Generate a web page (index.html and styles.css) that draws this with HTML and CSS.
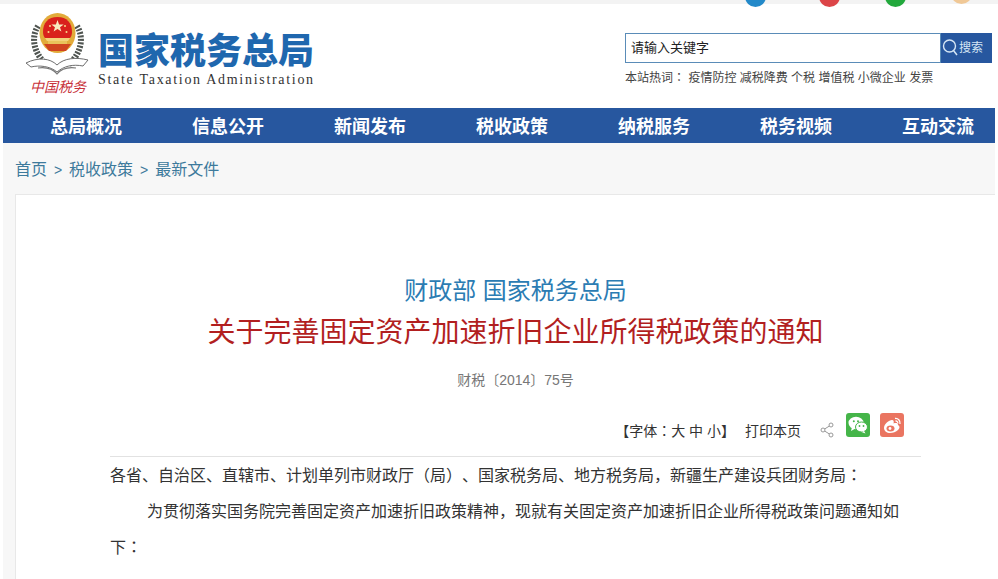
FILE: index.html
```html
<!DOCTYPE html>
<html>
<head>
  <meta charset="utf-8">
  <link rel="stylesheet" href="styles.css">
  <title>关于完善固定资产加速折旧企业所得税政策的通知</title>
</head>
<body>
  <div class="topbar">
    <span class="dot dot-blue"></span>
    <span class="dot dot-red"></span>
    <span class="dot dot-green"></span>
    <span class="dot dot-orange"></span>
  </div>

  <div class="header">
    <div class="logo">
      <div class="emblem">
        <svg width="70" height="63" viewBox="0 0 70 63">
          <!-- wreath -->
          <path d="M15 13 C8 24 10 40 24 52" fill="none" stroke="#4f5450" stroke-width="6" stroke-dasharray="2 1.4"/>
          <path d="M54 13 C61 24 59 40 45 52" fill="none" stroke="#4f5450" stroke-width="6" stroke-dasharray="2 1.4"/>
          <!-- gold ring and red field -->
          <ellipse cx="34.5" cy="20" rx="18" ry="20" fill="#e2ab3a"/>
          <path d="M34.5 4 C25 4 20 10 20 19 C20 22 21 24 22 25 H47 C48 24 49 22 49 19 C49 10 44 4 34.5 4 Z" fill="#d9211c"/>
          <path d="M34.5 7 l1.6 4.4 4.6 0 -3.7 2.8 1.4 4.4 -3.9 -2.7 -3.9 2.7 1.4 -4.4 -3.7 -2.8 4.6 0 Z" fill="#f8ecc0"/>
          <circle cx="27" cy="13" r="1" fill="#f6dc8a"/>
          <circle cx="42" cy="13" r="1" fill="#f6dc8a"/>
          <circle cx="25.5" cy="19" r="1" fill="#f6dc8a"/>
          <circle cx="43.5" cy="19" r="1" fill="#f6dc8a"/>
          <path d="M22 25 h25 l-2 3 h-21 Z" fill="#f3d27a"/>
          <path d="M25 28 h19 v3 h-19 Z" fill="#e9c25a"/>
          <path d="M21 31 h27 l-5 7 h-17 Z" fill="#d0441f"/>
          <!-- open book -->
          <path d="M3 50 C15 44 27 45 34 52 C41 45 53 44 65 47 L60 53 C50 51 41 53 34 59 C27 53 16 52 8 54 Z" fill="#fff" stroke="#6e6e6e" stroke-width="1"/>
          <path d="M15 55 C23 54 30 56 34 61 C38 56 45 54 53 55" fill="none" stroke="#777" stroke-width="1.2"/>
        </svg>
      </div>
      <div class="logo-script">中国税务</div>
    </div>
    <div class="brand">
      <div class="brand-name">国家税务总局</div>
      <div class="brand-en">State Taxation Administration</div>
    </div>
    <div class="search-area">
      <div class="search">
        <div class="search-input">请输入关键字</div>
        <div class="search-btn">
          <svg width="17" height="18" viewBox="0 0 17 18">
            <circle cx="7.5" cy="8" r="6" fill="none" stroke="#d5e6f5" stroke-width="1.4"/>
            <path d="M11.5 12.5 L15 17" stroke="#d5e6f5" stroke-width="1.5"/>
          </svg>
          <span>搜索</span>
        </div>
      </div>
      <div class="hotwords">本站热词<span class="colon">：</span> <a>疫情防控</a> <a>减税降费</a> <a>个税</a> <a>增值税</a> <a>小微企业</a> <a>发票</a></div>
    </div>
  </div>

  <div class="nav">
    <a>总局概况</a>
    <a>信息公开</a>
    <a>新闻发布</a>
    <a>税收政策</a>
    <a>纳税服务</a>
    <a>税务视频</a>
    <a>互动交流</a>
  </div>

  <div class="main">
    <div class="crumbs">首页 <i>&gt;</i> 税收政策 <i>&gt;</i> 最新文件</div>
    <div class="card">
      <h2 class="issuer">财政部 国家税务总局</h2>
      <h1 class="title">关于完善固定资产加速折旧企业所得税政策的通知</h1>
      <div class="docno">财税〔2014〕75号</div>
      <div class="tools">
        <span class="fontsize">【字体<span class="colon">：</span>大 中 小】</span>
        <span class="print">打印本页</span>
        <svg class="share" width="14" height="16" viewBox="0 0 14 16">
          <path d="M3 8 L11 3 M3 8 L11 13" stroke="#999" stroke-width="1" fill="none"/>
          <circle cx="3" cy="8" r="2" fill="#fff" stroke="#999"/>
          <circle cx="11" cy="3" r="2" fill="#fff" stroke="#999"/>
          <circle cx="11" cy="13" r="2" fill="#fff" stroke="#999"/>
        </svg>
        <span class="sns sns-wechat">
          <svg width="24" height="24" viewBox="0 0 24 24">
            <ellipse cx="10" cy="10" rx="7.5" ry="6.2" fill="#fff"/>
            <path d="M6 14 L5 18 L9.5 15.5 Z" fill="#fff"/>
            <ellipse cx="15.5" cy="14" rx="6" ry="5" fill="#fff" stroke="#45b549" stroke-width="1"/>
            <path d="M18 18 L19.5 20.5 L15.5 19 Z" fill="#fff"/>
            <circle cx="7.8" cy="8.2" r="1" fill="#45b549"/>
            <circle cx="12" cy="8.2" r="1" fill="#45b549"/>
            <circle cx="13.5" cy="13" r=".9" fill="#45b549"/>
            <circle cx="17.5" cy="13" r=".9" fill="#45b549"/>
          </svg>
        </span>
        <span class="sns sns-weibo">
          <svg width="24" height="24" viewBox="0 0 24 24">
            <path d="M4 15 C4 11 9 7 12 7 C14 7 14 9 13.5 10.5 C16 9.5 18 10 18 12 C20 13 20 15 18 17 C16 19 13 20 10 20 C7 20 4 18 4 15 Z" fill="#fff"/>
            <ellipse cx="10.5" cy="15.5" rx="4" ry="3" fill="#ea7561"/>
            <circle cx="10" cy="15.5" r="1.4" fill="#fff"/>
            <path d="M15 5.5 C18 5 20.5 7.5 20 11 M15.5 8 C17 7.8 18 9 17.8 10.5" fill="none" stroke="#fff" stroke-width="1.3"/>
          </svg>
        </span>
      </div>
      <div class="article">
        <p class="lead">各省、自治区、直辖市、计划单列市财政厅（局）、国家税务局、地方税务局，新疆生产建设兵团财务局<span class="colon">：</span></p>
        <p class="indent">为贯彻落实国务院完善固定资产加速折旧政策精神，现就有关固定资产加速折旧企业所得税政策问题通知如下<span class="colon">：</span></p>
      </div>
    </div>
  </div>
</body>
</html>
```

FILE: styles.css
```css
html, body {
  height: 579px;
  overflow: hidden;
}

body {
  margin: 0;
  background-color: #fff;
  color: #333;
  font-family: "Liberation Sans", "Noto Sans CJK SC", sans-serif;
  text-spacing-trim: space-all;
}

/* centred fullwidth colon, as in the original page font */
.colon {
  font-family: "Noto Sans CJK TC", sans-serif;
  line-height: 0;
}

.topbar {
  display: flex;
  height: 8px;
  padding-left: 745px;
  overflow: hidden;
  background: linear-gradient(#f3f3f3 4px, #fff 4px);
}

.dot {
  flex: none;
  width: 21px;
  height: 21px;
  margin-top: -14px;
  margin-right: 53px;
  border-radius: 50%;
}

.dot-blue { background-color: #2389c9; }
.dot-red { background-color: #dc4548; margin-right: 45px; }
.dot-green { background-color: #22a83c; margin-right: 45px; }
.dot-orange { background-color: #f0c896; margin-top: -17px; }

.header {
  display: flex;
  height: 100px;
}

.logo {
  width: 98px;
  padding: 5px 0 0 23px;
  box-sizing: border-box;
}

.emblem {
  height: 64px;
}

.logo-script {
  font-size: 14px;
  line-height: 20px;
  padding-left: 7px;
  color: #c8323a;
  font-style: italic;
}

.brand {
  width: 527px;
  padding-top: 24px;
  box-sizing: border-box;
}

.brand-name {
  font-size: 36px;
  line-height: 40px;
  font-weight: 900;
  color: #1f67ae;
}

.brand-en {
  margin-top: -1px;
  font-family: "Liberation Serif", serif;
  font-size: 14px;
  line-height: 18px;
  letter-spacing: 1.7px;
  color: #333;
}

.search-area {
  padding-top: 25px;
}

.search {
  display: flex;
  width: 367px;
  height: 30px;
}

.search-input {
  width: 316px;
  box-sizing: border-box;
  padding-left: 5px;
  border: 1px solid #5a8cb8;
  font-size: 13px;
  line-height: 28px;
  color: #222;
}

.search-btn {
  display: flex;
  align-items: center;
  flex: 1;
  padding: 0 0 3px 1px;
  box-sizing: border-box;
  background-color: #27579f;
  font-size: 12px;
  color: #d5e6f5;
}

.hotwords {
  margin-top: 7px;
  font-size: 12px;
  line-height: 16px;
  color: #444;
  white-space: nowrap;
}

.nav {
  display: flex;
  height: 35px;
  margin: 0 3px;
  padding-left: 12px;
  background-color: #27579f;
  overflow: hidden;
}

.nav a {
  flex: none;
  width: 142px;
  text-align: center;
  font-size: 18px;
  line-height: 39px;
  font-weight: bold;
  color: #fff;
}

.main {
  height: 436px;
  margin: 0 3px;
  padding-left: 12px;
  background-color: #f7f7f7;
}

.crumbs {
  height: 51px;
  font-size: 16px;
  line-height: 54px;
  color: #3d7a9c;
}

.crumbs i {
  font-style: normal;
  font-size: 14px;
  padding: 0 2.5px;
}

.card {
  height: 385px;
  padding: 0 74px 0 94px;
  background-color: #fff;
  border: 1px solid #e8e8e8;
  border-right: 0;
}

.issuer {
  margin: 79px 0 0;
  text-align: center;
  font-size: 24px;
  line-height: 34px;
  font-weight: normal;
  color: #2b7cb3;
}

.title {
  margin: 0;
  text-align: center;
  font-size: 28px;
  line-height: 50px;
  font-weight: normal;
  color: #b21f1f;
}

.docno {
  margin-top: 12px;
  text-align: center;
  font-size: 14px;
  line-height: 20px;
  color: #777;
}

.tools {
  display: flex;
  align-items: flex-start;
  justify-content: flex-end;
  height: 43px;
  margin-top: 23px;
  padding-right: 17px;
  border-bottom: 1px solid #e2e2e2;
  font-size: 14px;
  color: #333;
}

.fontsize {
  margin-top: 8px;
  line-height: 20px;
}

.print {
  margin: 8px 0 0 10px;
  line-height: 20px;
}

.share {
  margin: 9px 0 0 19px;
}

.sns {
  width: 24px;
  height: 24px;
  margin-left: 12px;
  border-radius: 3px;
}

.sns-wechat { background-color: #45b549; }
.sns-weibo { background-color: #ea7561; margin-left: 10px; }

.article {
  padding-top: 1px;
  font-size: 16px;
  line-height: 36px;
  color: #333;
}

.article p {
  margin: 0;
}

.indent {
  text-indent: 37px;
}
```
